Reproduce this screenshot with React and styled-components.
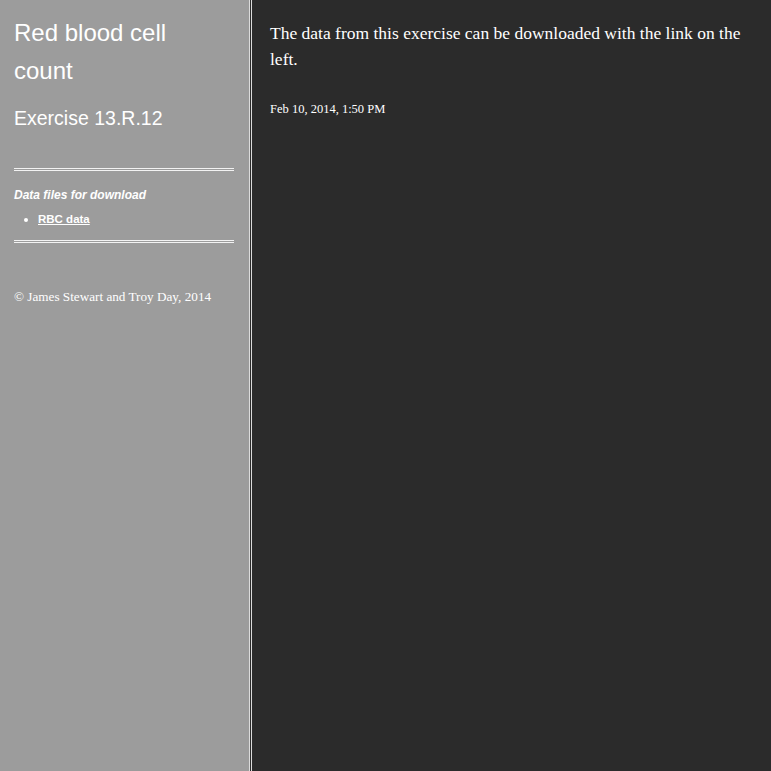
import React from "react";
import styled, { createGlobalStyle } from "styled-components";

const Global = createGlobalStyle`
  html, body { margin: 0; padding: 0; height: 100%; background: #2b2b2b; }
  #root { height: 100%; }
`;

const Page = styled.div`
  display: flex;
  height: 771px;
  overflow: hidden;
`;

const Sidebar = styled.aside`
  width: 249px;
  flex: none;
  box-sizing: border-box;
  background: #9c9c9c;
  padding: 14px 15px 0 14px;
  color: #fff;
  font-family: "Liberation Sans", Arial, sans-serif;
`;

const Title = styled.h1`
  margin: 0;
  font-size: 24px;
  font-weight: normal;
  line-height: 38px;
  width: 200px;
`;

const Subtitle = styled.h2`
  margin: 0;
  font-size: 19.5px;
  font-weight: normal;
  line-height: 28px;
  padding-top: 14px;
`;

const Rule = styled.div`
  border-top: 3px double #f2f2f2;
  margin-top: ${(p) => p.$top}px;
`;

const Section = styled.div`
  padding-top: 17px;
`;

const SectionLabel = styled.div`
  font-size: 12px;
  font-style: italic;
  font-weight: bold;
  line-height: 14px;
`;

const List = styled.ul`
  margin: 10px 0 0;
  padding-left: 24px;
  font-size: 11.5px;
  line-height: 14px;
  li::marker { font-size: 12px; }
`;

const Link = styled.a`
  color: #fff;
  font-weight: bold;
  text-decoration: underline;
`;

const Copyright = styled.p`
  margin: 46px 0 0;
  font-family: "Liberation Serif", "Times New Roman", serif;
  font-size: 13.2px;
  line-height: 16px;
`;

const Main = styled.main`
  flex: 1;
  background: #2b2b2b;
  border-left: 3px double #dcdcdc;
  padding: 20px 18px 0 18px;
  color: #fff;
  font-family: "Liberation Serif", "Times New Roman", serif;
`;

const Body = styled.p`
  margin: 0;
  font-size: 17.5px;
  line-height: 26px;
`;

const Stamp = styled.p`
  margin: 29px 0 0;
  font-size: 12.5px;
  line-height: 16px;
`;

export default function App() {
  return (
    <>
      <Global />
      <Page>
        <Sidebar>
          <Title>Red blood cell count</Title>
          <Subtitle>Exercise 13.R.12</Subtitle>
          <Rule $top={36} />
          <Section>
            <SectionLabel>Data files for download</SectionLabel>
            <List>
              <li>
                <Link href="#">RBC data</Link>
              </li>
            </List>
          </Section>
          <Rule $top={14} />
          <Copyright>© James Stewart and Troy Day, 2014</Copyright>
        </Sidebar>
        <Main>
          <Body>
            The data from this exercise can be downloaded with the link on the left.
          </Body>
          <Stamp>Feb 10, 2014, 1:50 PM</Stamp>
        </Main>
      </Page>
    </>
  );
}
